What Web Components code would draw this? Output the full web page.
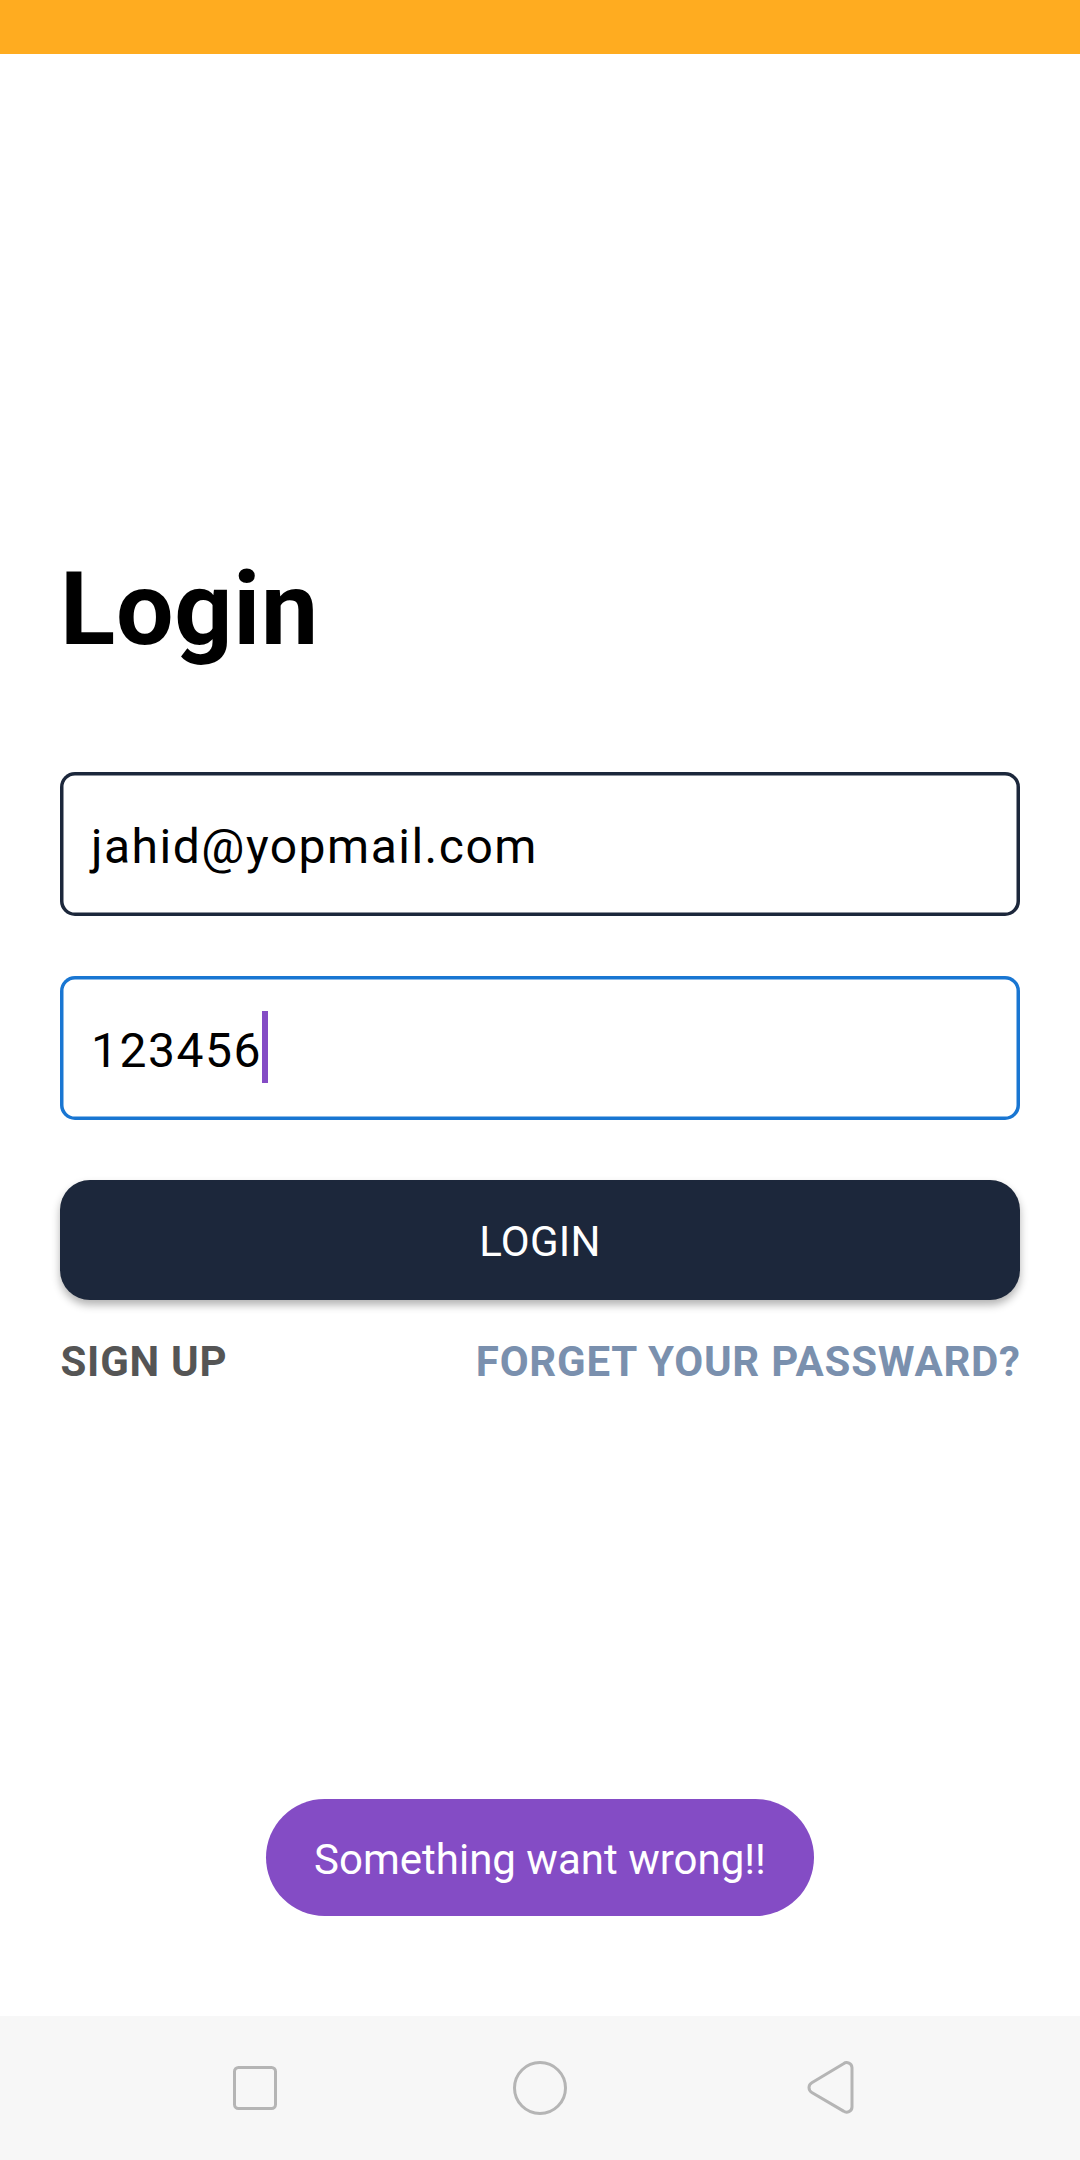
<!DOCTYPE html>
<html lang="en">
<head>
<meta charset="utf-8">
<title>Login</title>
<style>
html, body { margin: 0; height: 2160px; background: #fff; overflow: hidden; }
body { font-family: Roboto, sans-serif; color: #000; }
</style>
</head>
<body>
<app-screen>
  <status-bar slot="top"></status-bar>
  <login-form>
    <text-field>jahid@yopmail.com</text-field>
    <text-field focused>123456</text-field>
    <primary-button>LOGIN</primary-button>
    <link-row>
      <span slot="start">SIGN UP</span>
      <span slot="end">FORGET YOUR PASSWARD?</span>
    </link-row>
  </login-form>
  <toast-message>Something want wrong!!</toast-message>
  <nav-bar slot="bottom"></nav-bar>
</app-screen>
<script>
const define = (name, html) => customElements.define(name, class extends HTMLElement {
  constructor() {
    super();
    this.attachShadow({ mode: "open" }).innerHTML = html;
  }
});

define("app-screen", `
<style>
:host { display: flex; flex-direction: column; width: 1080px; height: 2160px; background: #fff; }
main { flex: 1; display: flex; flex-direction: column; justify-content: space-between; align-items: center; box-sizing: border-box; padding: 495px 60px 100px; }
</style>
<slot name="top"></slot><main><slot></slot></main><slot name="bottom"></slot>`);

define("status-bar", `<style>:host { display: block; flex: none; height: 54px; background: #ffac20; }</style>`);

define("login-form", `
<style>
:host { display: flex; flex-direction: column; gap: 60px; width: 100%; }
h1 { margin: 0 0 43px; font-size: 102px; line-height: 120px; font-weight: 700; letter-spacing: .75px; }
</style>
<h1>Login</h1><slot></slot>`);

define("text-field", `
<style>
:host { display: flex; align-items: center; box-sizing: border-box; height: 144px; padding: 6px 31px 0; box-shadow: inset 0 0 0 3.5px #1c273b; border-radius: 15px; font-size: 48px; line-height: 72px; letter-spacing: 1.5px; }
:host([focused]) { box-shadow: inset 0 0 0 3.5px #1976d2; }
i { display: none; width: 6px; height: 72px; background: #844cc5; margin-top: -9px; }
:host([focused]) i { display: block; }
</style>
<slot></slot><i></i>`);

define("primary-button", `
<style>
:host { display: flex; align-items: center; justify-content: center; box-sizing: border-box; height: 120px; padding-top: 3px; border-radius: 30px; background: #1c273b; color: #fff; font-size: 42px; letter-spacing: .25px; box-shadow: 0 5px 8px rgba(0,0,0,.3); }
</style>
<slot></slot>`);

define("link-row", `
<style>
:host { display: flex; justify-content: space-between; margin: -23px -.75px 0 .5px; font-size: 42px; line-height: 50px; font-weight: 700; letter-spacing: .75px; }
::slotted([slot=start]) { color: #555; }
::slotted([slot=end]) { color: #7a90ae; }
</style>
<slot name="start"></slot><slot name="end"></slot>`);

define("toast-message", `
<style>
:host { display: flex; align-items: center; justify-content: center; box-sizing: border-box; width: 548px; height: 117px; padding-top: 4px; border-radius: 58.5px; background: #844cc5; color: #fff; font-size: 42px; white-space: nowrap; }
</style>
<slot></slot>`);

define("nav-bar", `
<style>
:host { display: flex; flex: none; align-items: center; justify-content: space-between; box-sizing: border-box; height: 144px; padding: 0 225px; background: #f7f7f7; }
svg { display: block; width: 60px; height: 60px; fill: none; stroke: #b5b5b5; stroke-width: 3; }
</style>
<svg viewBox="0 0 60 60"><rect x="9.5" y="9.5" width="41" height="41" rx="4"/></svg>
<svg viewBox="0 0 60 60"><circle cx="30" cy="30" r="25.5"/></svg>
<svg viewBox="-6 0 60 60"><path d="M42.5 5.7L10.8 24.7a5.7 5.7 0 0 0 0 9.8L42.5 53.1a5.3 5.3 0 0 0 8.5-4V9.7a5.3 5.3 0 0 0-8.5-4Z"/></svg>`);

</script>
</body>
</html>
